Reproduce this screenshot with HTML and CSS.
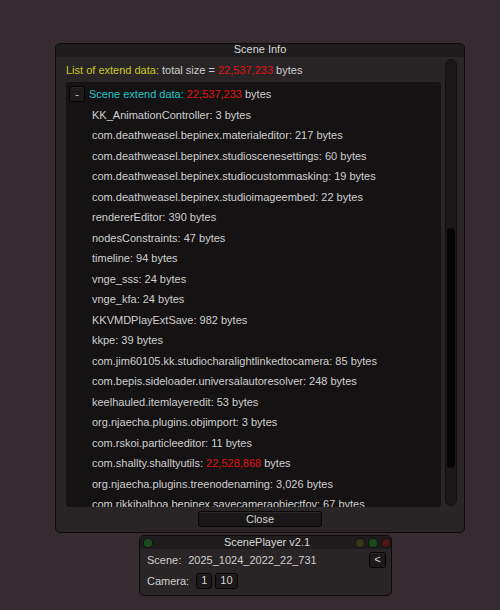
FILE: index.html
```html
<!DOCTYPE html>
<html lang="en">
<head>
  <meta charset="UTF-8" />
  <title>Scene Info</title>
  <link rel="stylesheet" href="styles.css">
</head>
<body>

  <!-- Scene Info window -->
  <div class="window info-window">
    <div class="title">Scene Info</div>
    <div class="body">
      <div class="main">
        <div class="header">
          <span class="yellow">List of extend data:</span> total size = <span class="red">22,537,233</span> bytes
        </div>
        <div class="list">
          <div class="row group">
            <button class="btn toggle">-</button>
            <span class="cyan">Scene extend data:</span>&nbsp;<span class="red">22,537,233</span>&nbsp;bytes
          </div>
          <div class="row item">KK_AnimationController: 3 bytes</div>
          <div class="row item">com.deathweasel.bepinex.materialeditor: 217 bytes</div>
          <div class="row item">com.deathweasel.bepinex.studioscenesettings: 60 bytes</div>
          <div class="row item">com.deathweasel.bepinex.studiocustommasking: 19 bytes</div>
          <div class="row item">com.deathweasel.bepinex.studioimageembed: 22 bytes</div>
          <div class="row item">rendererEditor: 390 bytes</div>
          <div class="row item">nodesConstraints: 47 bytes</div>
          <div class="row item">timeline: 94 bytes</div>
          <div class="row item">vnge_sss: 24 bytes</div>
          <div class="row item">vnge_kfa: 24 bytes</div>
          <div class="row item">KKVMDPlayExtSave: 982 bytes</div>
          <div class="row item">kkpe: 39 bytes</div>
          <div class="row item">com.jim60105.kk.studiocharalightlinkedtocamera: 85 bytes</div>
          <div class="row item">com.bepis.sideloader.universalautoresolver: 248 bytes</div>
          <div class="row item">keelhauled.itemlayeredit: 53 bytes</div>
          <div class="row item">org.njaecha.plugins.objimport: 3 bytes</div>
          <div class="row item">com.rskoi.particleeditor: 11 bytes</div>
          <div class="row item">com.shallty.shalltyutils: <span class="red">22,528,868</span> bytes</div>
          <div class="row item">org.njaecha.plugins.treenodenaming: 3,026 bytes</div>
          <div class="row item">com.rikkibalboa.bepinex.savecameraobjectfov: 67 bytes</div>
        </div>
      </div>
      <div class="scroll">
        <div class="thumb"></div>
      </div>
    </div>
    <div class="footer">
      <button class="btn close">Close</button>
    </div>
  </div>

  <!-- ScenePlayer window -->
  <div class="window player-window">
    <div class="title player-title">
      <span class="dot green"></span>
      <span class="title-text">ScenePlayer v2.1</span>
      <span class="dots">
        <span class="dot olive"></span>
        <span class="dot green"></span>
        <span class="dot maroon"></span>
      </span>
    </div>
    <div class="player-body">
      <div class="prow">
        <span class="label">Scene:</span>
        <span class="value">2025_1024_2022_22_731</span>
        <button class="btn small back">&lt;</button>
      </div>
      <div class="prow">
        <span class="label">Camera:</span>
        <button class="btn small">1</button>
        <button class="btn small">10</button>
      </div>
    </div>
  </div>

</body>
</html>
```

FILE: styles.css
```css
body {
  margin: 0;
  padding: 43px 0 0 0;
  background-color: #352b30;
  font-family: 'Liberation Sans', Arial, sans-serif;
  font-size: 11px;
  color: #cfcfcf;
  height: 610px;
  box-sizing: border-box;
  overflow: hidden;
}

.window {
  background: #292426;
  border: 1px solid #0d0b0c;
  border-radius: 5px;
  box-sizing: border-box;
}

.info-window {
  width: 410px;
  height: 490px;
  margin-left: 55px;
}

.title {
  height: 13px;
  line-height: 11px;
  text-align: center;
  background: #1f1c1d;
  color: #d8d8d8;
  border-radius: 4px 4px 0 0;
}

.body {
  display: flex;
  padding: 2px 7px 0 10px;
}

.main {
  flex: 1;
  min-width: 0;
}

.header {
  height: 23px;
  line-height: 22px;
  color: #cfcfcf;
}

.yellow { color: #c9c920; }
.cyan { color: #22c4c9; }
.red { color: #e01313; }

.list {
  height: 425px;
  background: #151213;
  border-radius: 3px;
  overflow: hidden;
  padding-top: 2px;
  box-sizing: border-box;
}

.row {
  height: 20.5px;
  line-height: 20px;
  white-space: nowrap;
}

.group {
  display: flex;
  align-items: center;
  padding-left: 3px;
}

.item {
  padding-left: 26px;
}

.btn {
  font-family: inherit;
  font-size: 11px;
  color: #d4d4d4;
  background: #1c191a;
  border: 1px solid #050404;
  border-radius: 3px;
  padding: 0;
  box-sizing: border-box;
  box-shadow: inset 0 1px 0 #2b2728;
}

.toggle {
  flex: none;
  width: 16px;
  height: 16px;
  line-height: 13px;
  margin-right: 4px;
  background: #1d1a1b;
}

.scroll {
  width: 12px;
  height: 447px;
  margin-left: 4px;
  background: #1b1819;
  border: 1px solid #111;
  border-radius: 6px;
  box-sizing: border-box;
}

.thumb {
  margin: 168px auto 0;
  width: 8px;
  height: 240px;
  background: #050505;
  border-radius: 4px;
}

.footer {
  display: flex;
  justify-content: center;
  padding-top: 4px;
}

.close {
  width: 124px;
  height: 16px;
  line-height: 13px;
  background: #1a1718;
}

/* ScenePlayer */
.player-window {
  width: 253px;
  height: 61px;
  margin: 2px 0 0 139px;
}

.player-title {
  display: flex;
  align-items: center;
  padding: 0 0 0 3px;
  height: 13px;
}

.title-text {
  flex: 1;
  text-align: center;
  margin-left: 26px;
}

.dots {
  display: flex;
  gap: 3px;
}

.dot {
  display: inline-block;
  width: 10px;
  height: 10px;
  border-radius: 4px;
  border: 1px solid #111;
  box-sizing: border-box;
}

.dot.green { background: #1c4a1f; }
.dot.olive { background: #35351a; }
.dot.maroon { background: #4a1616; }

.player-body {
  padding: 0 5px 0 7px;
}

.prow {
  display: flex;
  align-items: center;
  height: 21px;
  gap: 3px;
}

.label {
  margin-right: 4px;
}

.value {
  flex: 1;
}

.small {
  height: 16px;
  min-width: 16px;
  padding: 0 4px;
  line-height: 13px;
}

.back {
  width: 17px;
}
```
